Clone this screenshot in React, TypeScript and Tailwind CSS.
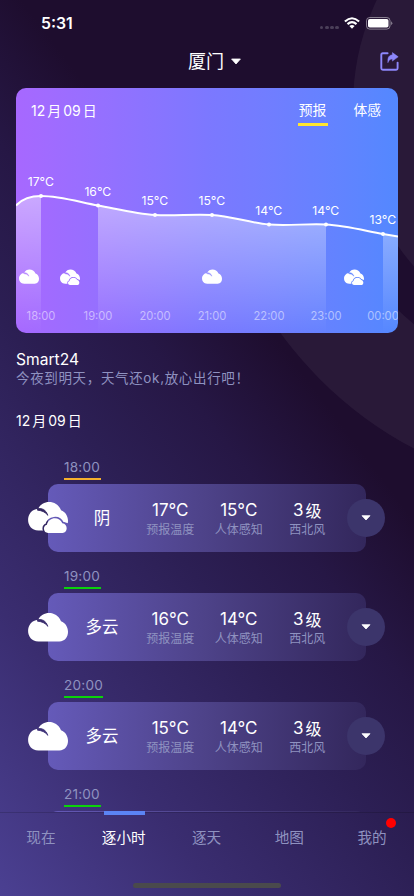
import React from "react";

const FONT = "font-['Inter','Noto_Sans_CJK_SC',sans-serif]";

const temps = [
  { x: 41, y: 196, t: "17°C", h: "18:00" },
  { x: 98, y: 205.5, t: "16°C", h: "19:00" },
  { x: 155, y: 215, t: "15°C", h: "20:00" },
  { x: 212, y: 215, t: "15°C", h: "21:00" },
  { x: 269, y: 224.5, t: "14°C", h: "22:00" },
  { x: 326, y: 224.5, t: "14°C", h: "23:00" },
  { x: 383, y: 234, t: "13°C", h: "00:00" },
];

const LINE =
  "M0 117.5 C6 111 15 108 25 108 C44 108 63 114 82 117.5 C101 121 120 126 139 127 C158 128 177 126 196 127 C215 128 234 135 253 136.5 C272 138 291 135.5 310 136.5 C329 137.5 348 142.5 367 146 L382 148.5";

const SMALL_CLOUD =
  "M20 32 A4.2 4.2 0 0 1 18.9 23.8 C20.6 16 31.2 15 34.3 22.2 C40.2 22.8 40 32 34.5 32 Z";

function Cloud({ id, double = false }: { id: string; double?: boolean }) {
  return (
    <svg viewBox="0 0 40 33" className="block h-full w-full">
      <mask id={id} maskUnits="userSpaceOnUse" x="0" y="0" width="40" height="33">
        <rect width="40" height="33" fill="white" />
        <path d="M9.5 7.6 Q17 6.2 20 14.4 Q16 9.6 9.5 9.2 Z" fill="black" stroke="black" strokeWidth=".8" />
        {double && (
          <g fill="black">
            <path d={SMALL_CLOUD} stroke="black" strokeWidth="3" />
            <path d="M34 20.6 L40 22.2 V33 H34 Z" />
          </g>
        )}
      </mask>
      <path
        mask={`url(#${id})`}
        d="M10.4 29.4 C-3.4 29.2 -3.2 8.8 10.2 7.8 C14.2 -1.4 28.8 -1.6 33 9.2 C42.6 12.4 42.6 29 31.3 29.4 Z"
        fill="white"
      />
      {double && <path d={SMALL_CLOUD} fill="white" />}
    </svg>
  );
}

function DateLabel() {
  return (
    <span className="flex gap-[2px] whitespace-nowrap">
      <span>12</span>
      <span>月</span>
      <span>09</span>
      <span>日</span>
    </span>
  );
}

function StatusBar() {
  return (
    <div className="flex h-11 items-center pl-[41px] pr-[21px] pt-[3px] text-white">
      <span className="grow text-[15.8px] font-semibold">5:31</span>
      <div className="mt-2 flex gap-[1.4px]">
        {[0, 1, 2, 3].map((i) => (
          <i key={i} className="h-[3.8px] w-[3.8px] rounded-full bg-[#4b3f59]" />
        ))}
      </div>
      <svg width="16" height="12" viewBox="0 0 16 12" className="ml-[5px] mt-[-2px]" fill="none" stroke="white" strokeWidth="2.1">
        <path d="M.9 4.5 Q8 -2 15.1 4.5" />
        <path d="M3.5 7.1 Q8 3 12.5 7.1" />
        <path d="M5.4 9 Q8 6.8 10.6 9 L8 11.7 Z" fill="white" stroke="none" />
      </svg>
      <svg width="27" height="13" viewBox="0 0 27 13" className="ml-[6px] mt-[-1px]">
        <rect x=".5" y=".5" width="23.5" height="11.6" rx="3.2" fill="none" stroke="white" strokeOpacity=".45" />
        <rect x="2" y="2" width="20.5" height="8.6" rx="1.8" fill="white" />
        <path d="M25.2 4.3 Q27.4 6.3 25.2 8.3 Z" fill="white" fillOpacity=".5" />
      </svg>
    </div>
  );
}

function TitleBar() {
  return (
    <div className="flex h-9 items-center text-white">
      <div className="flex grow items-center gap-[7px] pl-[188px] text-[18px]">
        <span className="-mt-px">厦门</span>
        <svg width="10" height="7" viewBox="0 0 10 7" className="-mt-px">
          <path d="M.6 1H9.4L5 6Z" fill="white" stroke="white" strokeWidth=".8" strokeLinejoin="round" />
        </svg>
      </div>
      <div className="pr-[15px]">
        <svg width="19" height="19" viewBox="0 0 19 19" fill="none" className="-mt-px">
          <path
            d="M7.6 1.3H2.8Q1.3 1.3 1.3 2.8V16.2Q1.3 17.7 2.8 17.7H16.2Q17.6 17.7 17.6 16.2V10.6"
            stroke="#8d87fa"
            strokeWidth="1.9"
            strokeLinecap="round"
          />
          <path d="M12.4 .6L18.2 4.8L12.4 9.1V6.9Q9 6.8 7.9 10.7Q7 3.2 12.4 2.8Z" fill="#8d87fa" stroke="#8d87fa" strokeWidth=".5" strokeLinejoin="round" />
        </svg>
      </div>
    </div>
  );
}

function Chart() {
  return (
    <section className="relative mx-4 h-[245px] shrink-0 overflow-hidden rounded-[10px] bg-linear-to-r from-[#a768ff] via-[#7c78ff] to-[#5388ff]">
      <svg viewBox="0 0 382 245" className="absolute inset-0 h-full w-full">
        <defs>
          <linearGradient id="fade" x1="0" y1="108" x2="0" y2="245" gradientUnits="userSpaceOnUse">
            <stop offset="0" stopColor="white" stopOpacity=".42" />
            <stop offset="1" stopColor="white" stopOpacity="0" />
          </linearGradient>
          <clipPath id="bands">
            <rect width="25" height="245" />
            <rect x="82" width="228" height="245" />
            <rect x="367" width="15" height="245" />
          </clipPath>
        </defs>
        <path d={LINE + " V245 H0 Z"} fill="url(#fade)" clipPath="url(#bands)" />
        <path d={LINE} fill="none" stroke="white" strokeWidth="2" />
        {temps.map((p) => (
          <g key={p.h} fontFamily="Inter, sans-serif" textAnchor="middle" fill="white">
            <circle cx={p.x - 16} cy={p.y - 88} r="2" />
            <text x={p.x - 16.2} y={p.y - 98} fontSize="12.2">{p.t}</text>
            <text x={p.x - 16} y="232" fontSize="11.2" fillOpacity=".5">{p.h}</text>
          </g>
        ))}
      </svg>
      <div className="relative flex h-[45px] items-center justify-between pl-[15px] pr-[17px] text-[14px] text-white">
        <DateLabel />
        <div className="flex gap-[27px] text-[13.8px]">
          <span className="relative">
            预报
            <i className="absolute -left-px -right-[2px] top-[23px] h-[3px] bg-[#ffe62e]" />
          </span>
          <span>体感</span>
        </div>
      </div>
      <div className="absolute left-[3px] top-[181px] h-[16.5px] w-5"><Cloud id="c1" /></div>
      <div className="absolute left-[44px] top-[181px] h-[16.5px] w-5"><Cloud id="c2" double /></div>
      <div className="absolute left-[186px] top-[181px] h-[16.5px] w-5"><Cloud id="c3" /></div>
      <div className="absolute left-[328px] top-[181px] h-[16.5px] w-5"><Cloud id="c4" double /></div>
    </section>
  );
}

const hours = [
  { time: "18:00", sky: "阴", t: "17°C", f: "15°C", bar: "bg-[#f6b02c]", w: "w-[37px]", double: true },
  { time: "19:00", sky: "多云", t: "16°C", f: "14°C", bar: "bg-[#0bd30b]", w: "w-[37px]", double: false },
  { time: "20:00", sky: "多云", t: "15°C", f: "14°C", bar: "bg-[#0bd30b]", w: "w-[39px]", double: false },
];

const CARD = "ml-12 w-[318px] bg-linear-to-r from-[#655ab9] via-[#4d4288] to-[#33275c]";

function Metric({ value, label }: { value: React.ReactNode; label: string }) {
  return (
    <div className="flex w-[68.5px] flex-col items-center pt-[2px]">
      <span className="flex h-5 items-center gap-[2px] text-[17px] text-white">{value}</span>
      <span className="text-[12px] leading-[17px] text-[#8f92c0]">{label}</span>
    </div>
  );
}

function HourTime({ time, bar, w }: { time: string; bar: string; w: string }) {
  return (
    <div className="ml-16 flex h-[27px] flex-col items-start">
      <span className="h-[21px] text-[13.6px] leading-[21px] tracking-[0.2px] text-[#8f92c0]">{time}</span>
      <i className={`h-[2px] ${w} ${bar}`} />
    </div>
  );
}

function Hour({ row }: { row: (typeof hours)[number] }) {
  return (
    <div className="h-[109px] shrink-0">
      <HourTime time={row.time} bar={row.bar} w={row.w} />
      <div className={`relative flex h-[68px] items-center rounded-[10px] ${CARD}`}>
        <span className="w-[88px] pl-5 pt-px text-center text-[16.5px] text-white">{row.sky}</span>
        <Metric value={row.t} label="预报温度" />
        <Metric value={row.f} label="人体感知" />
        <Metric value={<><span>3</span><span className="text-[16px]">级</span></>} label="西北风" />
        <div className={`absolute -left-5 h-[33px] w-10 ${row.double ? "top-[17px]" : "top-[18.5px]"}`}>
          <Cloud id={"h" + row.time.slice(0, 2)} double={row.double} />
        </div>
        <button className="absolute -right-[19px] top-[15px] flex h-[38px] w-[38px] items-center justify-center rounded-full bg-[#3c356b]">
          <svg width="10" height="6" viewBox="0 0 10 6">
            <path d="M1 .7H9L5 5Z" fill="white" stroke="white" strokeWidth=".8" strokeLinejoin="round" />
          </svg>
        </button>
      </div>
    </div>
  );
}

const tabs = ["现在", "逐小时", "逐天", "地图", "我的"];

function TabBar() {
  return (
    <nav className="relative flex h-[84px] shrink-0 flex-col items-center border-t border-black/15">
      <div className="flex w-full">
        {tabs.map((tab, i) => (
          <div
            key={tab}
            className={`relative flex h-[50px] flex-1 items-center justify-center pt-px text-[14.6px] ${i === 1 ? "text-white" : "text-[#8f92c0]"}`}
          >
            <span className="-ml-px">{tab}</span>
            {i === 1 && <i className="absolute -top-[2px] left-[21px] h-[4px] w-[41px] bg-[#5b84f5]" />}
            {i === 4 && <i className="absolute right-[18px] top-[5px] h-[10px] w-[10px] rounded-full bg-[#ff0000]" />}
          </div>
        ))}
      </div>
      <div className="mt-5 h-[5px] w-[148px] rounded-full bg-[#4a4a4c]" />
    </nav>
  );
}

export default function App() {
  return (
    <div
      className={`relative flex h-[896px] w-[414px] flex-col overflow-hidden bg-[linear-gradient(53deg,#4b4092_0%,#3a2d70_20%,#2c1f54_40%,#261745_52%,#1e0d2e_64%,#1e0d2e_100%)] ${FONT}`}
    >
      <svg viewBox="0 0 414 896" className="absolute inset-0 h-full w-full">
        <clipPath id="lower"><rect y="290" width="414" height="606" /></clipPath>
        <circle cx="597" cy="105" r="244" fill="white" fillOpacity=".05" />
        <circle cx="596" cy="103" r="338.5" fill="none" stroke="white" strokeOpacity=".05" strokeWidth="104" clipPath="url(#lower)" />
      </svg>
      <header className="relative h-[88px] shrink-0">
        <StatusBar />
        <TitleBar />
      </header>
      <Chart />
      <main className="relative flex h-[479px] shrink-0 flex-col overflow-hidden">
        <h2 className="ml-4 mt-4 h-[21px] shrink-0 text-[15.6px] leading-[22px] text-white">Smart24</h2>
        <p className="ml-4 h-4 shrink-0 whitespace-nowrap text-[13.5px] leading-4 tracking-[0.65px] text-[#8f92c0]">今夜到明天，天气还ok,放心出行吧！</p>
        <h3 className="ml-4 mt-6 h-[22px] shrink-0 text-[14px] leading-[22px] text-white"><DateLabel /></h3>
        <div className="mt-[25px] flex flex-col">
          {hours.map((h) => <Hour key={h.time} row={h} />)}
          <HourTime time="21:00" bar="bg-[#0bd30b]" w="w-[37px]" />
          <div className={`h-5 rounded-t-[10px] ${CARD}`} />
        </div>
      </main>
      <TabBar />
    </div>
  );
}
